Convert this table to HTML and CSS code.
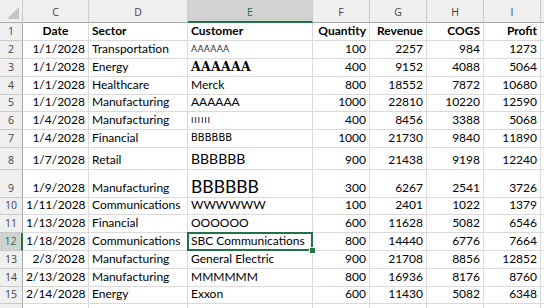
FILE: index.html
```html
<!DOCTYPE html>
<html lang="en">
<head>
    <meta charset="UTF-8">
    <meta name="viewport" content="width=device-width, initial-scale=1.0">
    <title>Sales Sheet</title>
    <link rel="stylesheet" href="styles.css">
</head>
<body>
    <table class="sheet">
        <colgroup>
            <col class="col-row">
            <col class="col-date">
            <col class="col-sector">
            <col class="col-customer">
            <col class="col-num">
            <col class="col-num">
            <col class="col-num">
            <col class="col-num">
            <col>
        </colgroup>
        <thead>
            <tr class="col-heads">
                <th class="corner"><span class="corner-mark"></span></th>
                <th>C</th>
                <th>D</th>
                <th class="selected">E</th>
                <th>F</th>
                <th>G</th>
                <th>H</th>
                <th>I</th>
                <th></th>
            </tr>
        </thead>
        <tbody>
            <tr>
                <th>1</th>
                <td class="bold center">Date</td>
                <td class="bold">Sector</td>
                <td class="bold">Customer</td>
                <td class="bold num">Quantity</td>
                <td class="bold num">Revenue</td>
                <td class="bold num">COGS</td>
                <td class="bold num">Profit</td>
                <td></td>
            </tr>
            <tr>
                <th>2</th>
                <td class="num">1/1/2028</td>
                <td>Transportation</td>
                <td class="cust-tiny">AAAAAA</td>
                <td class="num">100</td>
                <td class="num">2257</td>
                <td class="num">984</td>
                <td class="num">1273</td>
                <td></td>
            </tr>
            <tr>
                <th>3</th>
                <td class="num">1/1/2028</td>
                <td>Energy</td>
                <td class="cust-slab">AAAAAA</td>
                <td class="num">400</td>
                <td class="num">9152</td>
                <td class="num">4088</td>
                <td class="num">5064</td>
                <td></td>
            </tr>
            <tr>
                <th>4</th>
                <td class="num">1/1/2028</td>
                <td>Healthcare</td>
                <td>Merck</td>
                <td class="num">800</td>
                <td class="num">18552</td>
                <td class="num">7872</td>
                <td class="num">10680</td>
                <td></td>
            </tr>
            <tr class="short">
                <th>5</th>
                <td class="num">1/1/2028</td>
                <td>Manufacturing</td>
                <td>AAAAAA</td>
                <td class="num">1000</td>
                <td class="num">22810</td>
                <td class="num">10220</td>
                <td class="num">12590</td>
                <td></td>
            </tr>
            <tr>
                <th>6</th>
                <td class="num">1/4/2028</td>
                <td>Manufacturing</td>
                <td class="cust-thin">IIIIII</td>
                <td class="num">400</td>
                <td class="num">8456</td>
                <td class="num">3388</td>
                <td class="num">5068</td>
                <td></td>
            </tr>
            <tr>
                <th>7</th>
                <td class="num">1/4/2028</td>
                <td>Financial</td>
                <td class="cust-wide">BBBBBB</td>
                <td class="num">1000</td>
                <td class="num">21730</td>
                <td class="num">9840</td>
                <td class="num">11890</td>
                <td></td>
            </tr>
            <tr class="tall">
                <th>8</th>
                <td class="num">1/7/2028</td>
                <td>Retail</td>
                <td class="cust-large">BBBBBB</td>
                <td class="num">900</td>
                <td class="num">21438</td>
                <td class="num">9198</td>
                <td class="num">12240</td>
                <td></td>
            </tr>
            <tr class="taller">
                <th>9</th>
                <td class="num">1/9/2028</td>
                <td>Manufacturing</td>
                <td class="cust-huge">BBBBBB</td>
                <td class="num">300</td>
                <td class="num">6267</td>
                <td class="num">2541</td>
                <td class="num">3726</td>
                <td></td>
            </tr>
            <tr class="short">
                <th>10</th>
                <td class="num">1/11/2028</td>
                <td>Communications</td>
                <td>WWWWWW</td>
                <td class="num">100</td>
                <td class="num">2401</td>
                <td class="num">1022</td>
                <td class="num">1379</td>
                <td></td>
            </tr>
            <tr>
                <th>11</th>
                <td class="num">1/13/2028</td>
                <td>Financial</td>
                <td>OOOOOO</td>
                <td class="num">600</td>
                <td class="num">11628</td>
                <td class="num">5082</td>
                <td class="num">6546</td>
                <td></td>
            </tr>
            <tr class="active-row">
                <th>12</th>
                <td class="num">1/18/2028</td>
                <td>Communications</td>
                <td class="active-cell">SBC Communications</td>
                <td class="num">800</td>
                <td class="num">14440</td>
                <td class="num">6776</td>
                <td class="num">7664</td>
                <td></td>
            </tr>
            <tr>
                <th>13</th>
                <td class="num">2/3/2028</td>
                <td>Manufacturing</td>
                <td>General Electric</td>
                <td class="num">900</td>
                <td class="num">21708</td>
                <td class="num">8856</td>
                <td class="num">12852</td>
                <td></td>
            </tr>
            <tr>
                <th>14</th>
                <td class="num">2/13/2028</td>
                <td>Manufacturing</td>
                <td>MMMMMM</td>
                <td class="num">800</td>
                <td class="num">16936</td>
                <td class="num">8176</td>
                <td class="num">8760</td>
                <td></td>
            </tr>
            <tr class="short">
                <th>15</th>
                <td class="num">2/14/2028</td>
                <td>Energy</td>
                <td>Exxon</td>
                <td class="num">600</td>
                <td class="num">11430</td>
                <td class="num">5082</td>
                <td class="num">6348</td>
                <td></td>
            </tr>
            <tr>
                <th></th>
                <td></td><td></td><td></td><td></td><td></td><td></td><td></td><td></td>
            </tr>
        </tbody>
    </table>
</body>
</html>
```

FILE: styles.css
```css
/* Spreadsheet grid, Excel look */
body {
    margin: 0;
    background: #fff;
    overflow: hidden;
}

.sheet {
    border-collapse: separate;
    border-spacing: 0;
    table-layout: fixed;
    width: 560px;
    font-family: Lato, "Liberation Sans", sans-serif;
    font-size: 12px;
    color: #000;
}
.col-row { width: 23px; }
.col-date { width: 66px; }
.col-sector { width: 99px; }
.col-customer { width: 125px; }
.col-num { width: 57px; }

.sheet td,
.sheet th {
    border-right: 1px solid #dadada;
    border-bottom: 1px solid #dadada;
    padding: 0 3px 2px;
    line-height: 14px;
    white-space: nowrap;
    overflow: hidden;
    vertical-align: bottom;
    text-align: left;
    font-weight: normal;
}
.sheet tbody tr { height: 18px; }
.sheet tbody tr.short { height: 17px; }
.sheet tbody tr.tall { height: 22px; }
.sheet tbody tr.taller { height: 28px; }

/* column + row headings */
.col-heads { height: 23px; }
.col-heads th {
    background: #efefef;
    color: #444;
    font-family: "Open Sans", sans-serif;
    font-size: 10.5px;
    text-align: center;
    border-right-color: #cacaca;
    border-bottom-color: #ababab;
    padding: 0 0 3px;
}
.col-heads th.selected {
    background: #d2d2d2;
    color: #217346;
    border-bottom: 2px solid #217346;
    padding-bottom: 2px;
}
.corner { position: relative; }
.corner-mark {
    position: absolute;
    right: 3px;
    bottom: 3px;
    width: 0;
    height: 0;
    border-left: 12px solid transparent;
    border-bottom: 12px solid #c4c4c4;
}
.sheet tbody th {
    background: #efefef;
    color: #444;
    font-family: "Open Sans", sans-serif;
    font-size: 10.5px;
    text-align: center;
    padding: 0 0 2px;
    border-right-color: #ababab;
    border-bottom-color: #cacaca;
}
.sheet tbody .active-row th {
    background: #d2d2d2;
    color: #217346;
    border-right: 2px solid #217346;
}

/* cell formats */
.sheet .bold { font-weight: bold; }
.sheet .center { text-align: center; }
.sheet .num { text-align: right; }

.sheet .cust-tiny {
    font-family: "DejaVu Sans", sans-serif;
    font-size: 9px;
    color: #333;
}
.sheet .cust-slab {
    font-family: "DejaVu Serif", serif;
    font-size: 12.5px;
    font-weight: 900;
    letter-spacing: 0.3px;
}
.sheet .cust-thin {
    font-family: "Liberation Sans", sans-serif;
    font-size: 9px;
    letter-spacing: 0.8px;
}
.sheet .cust-wide {
    font-family: "DejaVu Sans", sans-serif;
    font-size: 10px;
}
.sheet .cust-large {
    font-size: 14px;
    line-height: 1;
    padding-bottom: 3px;
}
.sheet .cust-huge {
    font-size: 17.5px;
    line-height: 1;
    padding-bottom: 2px;
}

/* active cell outline and fill handle */
.sheet .active-cell {
    position: relative;
    overflow: visible;
}
.active-cell::after {
    content: "";
    position: absolute;
    left: -1px;
    top: -1px;
    right: -1px;
    bottom: -1px;
    border: 2px solid #217346;
}
.active-cell::before {
    content: "";
    position: absolute;
    right: -4px;
    bottom: -4px;
    width: 5px;
    height: 5px;
    background: #217346;
    border: 1px solid #fff;
    z-index: 1;
}
```
